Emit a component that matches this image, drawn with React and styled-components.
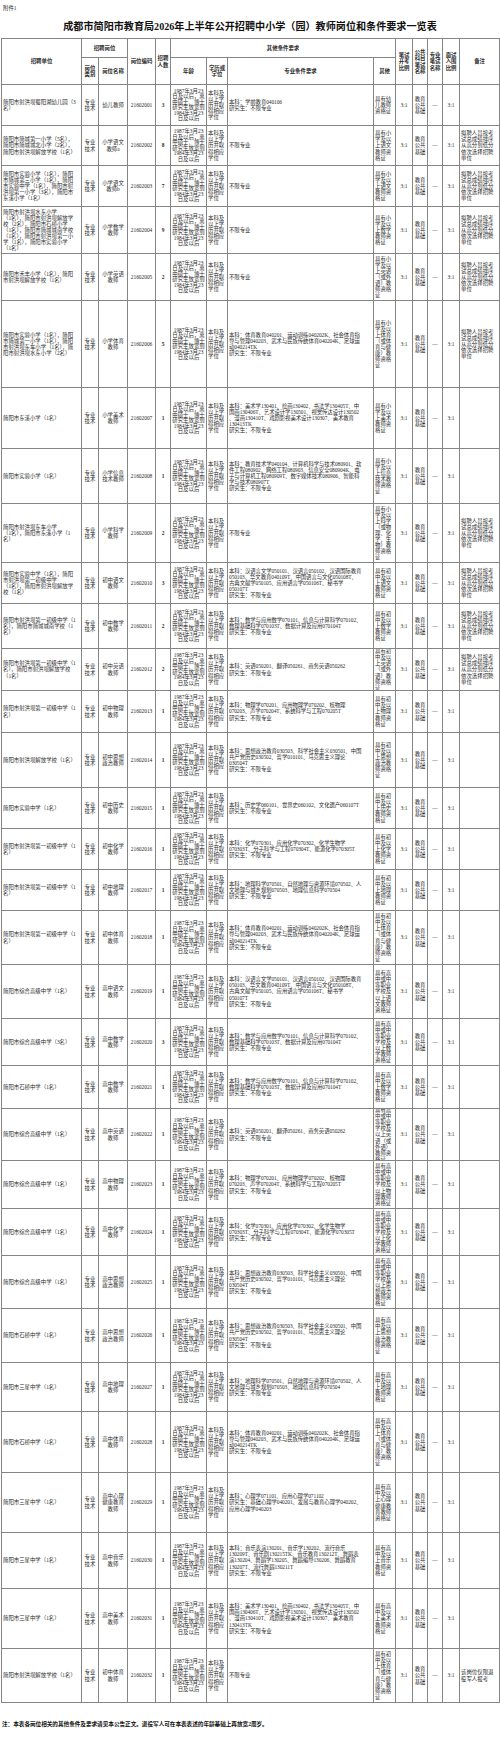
import React from "react";
import styled, { createGlobalStyle } from "styled-components";

const GlobalStyle = createGlobalStyle`
  html, body {
    margin: 0;
    padding: 0;
    background: #fff;
  }
  body {
    font-family: "Liberation Serif", "Noto Sans CJK SC", serif;
    color: #2a2a2a;
  }
`;

const COLS = [80, 17, 29, 28, 15, 36, 21, 146, 22, 17, 15, 15, 17, 40];

const AGE = "1987年3月23\n日及以后，离\n中硕士、博士\n研究生放宽到\n1984年3月23\n日及以后";
const EDU = "本科及以上学历并取得相应学位";
const REMARK = "拟聘人员按考\n试总成绩排序\n从高分到低分\n依次选择招聘\n单位";
const NONE = "不限专业";

const S_PE =
  "本科：体育教育040201、运动训练040202K、社会体育指\n导与管理040203、武术与民族传统体育040204K、足球运\n动040214TK\n研究生：不限专业";
const S_ART =
  "本科：美术学130401、绘画130402、书法学130405T、中\n国画130406T、艺术设计学130501、视觉传达设计130502\n、漫画130410T、戏剧影视美术设计130307、美术教育\n130413TK\n研究生：不限专业";
const S_CHN =
  "本科：汉语言文学050101、汉语言050102、汉语国际教育\n050103、华文教育040109T、中国语言与文化050108T、\n古典文献学050105、应用语言学050106T、秘书学\n050107T\n研究生：不限专业";
const S_MATH =
  "本科：数学与应用数学070101、信息与计算科学070102、\n数理基础科学070103T、数据计算及应用070104T\n研究生：不限专业";
const S_ENG = "本科：英语050201、翻译050261、商务英语050262\n研究生：不限专业";
const S_PHY =
  "本科：物理学070201、应用物理学070202、核物理\n070203、声学070204T、系统科学与工程070205T\n研究生：不限专业";
const S_POL =
  "本科：思想政治教育030503、科学社会主义030501、中国\n共产党历史030502、哲学010101、马克思主义理论\n030504T\n研究生：不限专业";
const S_CHEM =
  "本科：化学070301、应用化学070302、化学生物学\n070303T、分子科学与工程070304T、能源化学070305T\n研究生：不限专业";
const S_GEO =
  "本科：地理科学070501、自然地理与资源环境070502、人\n文地理与城乡规划070503、地理信息科学070504\n研究生：不限专业";

const HS = "具有高中或中等职业学校及以上";
const FIRST = "简阳市射洪坝第一初级中学（1\n名）";

const rows = [
  { h: 41, unit: "简阳市射洪坝蜀阳湖幼儿园（3\n名）", name: "幼儿教师", n: 3, spec: "本科：学前教育040106\n研究生：不限专业", other: "具有幼儿教师资格证" },
  { h: 40, unit: "简阳市简城第一小学（5名），\n简阳市简城城北小学（2名），\n简阳市射洪坝解放学校（1名）", name: "小学语文\n教师a", n: 8, spec: NONE, other: "具有小学及以上语文教师资格证", remark: REMARK },
  { h: 41, unit: "简阳市实验小学（1名），简阳\n市简城第三小学（1名），简阳\n市实验中学（1名），简阳市射\n洪坝第一小学（3名），简阳市\n东溪小学（1名）", name: "小学语文\n教师b", n: 7, spec: NONE, other: "具有小学及以上语文教师资格证", remark: REMARK },
  { h: 47, unit: "简阳市射洪坝水东小学\n（1名），简阳市射洪坝解放学\n校（2名），简阳市石桥小学\n（1名），简阳市简城城南学校\n（1名），简阳市射洪坝第一小\n学（1名），简阳市实验小学\n（1名）", name: "小学数学\n教师", n: 9, spec: NONE, other: "具有小学及以上数学教师资格证", remark: REMARK },
  { h: 47, unit: "简阳市禾丰小学（1名），简阳\n市射洪坝解放学校（1名）", name: "小学英语\n教师", n: 2, spec: NONE, other: "具有小学及以上英语（或外语）教师资格证", remark: REMARK },
  { h: 87, unit: "简阳市实验小学（1名），简阳\n市简城第一小学（1名），简阳\n市射洪坝东车小学（1名），简\n阳市射洪坝水东小学（2名）", name: "小学体育\n教师", n: 5, spec: S_PE, other: "具有小学及以上体育（或体育与健康）教师资格证", remark: REMARK },
  { h: 61, unit: "简阳市东溪小学（1名）", name: "小学美术\n教师", n: 1, spec: S_ART, other: "具有小学及以上美术教师资格证" },
  { h: 55, unit: "简阳市实验小学（1名）", name: "小学信息\n技术教师", n: 1, spec: "本科：教育技术学040104、计算机科学与技术080901、软\n件工程080902、网络工程080903、信息安全080904K、电\n子与计算机工程080909T、数字媒体技术080906、智能科\n学与技术080907T\n研究生：不限专业", other: "具有小学及以上信息技术教师资格证" },
  { h: 59, unit: "简阳市射洪坝东车小学\n（1名），简阳市东溪小学（1\n名）", name: "小学科学\n教师", n: 2, spec: NONE, other: "具有小学及以上科学（或物理、化学、生物）教师资格证", remark: REMARK },
  { h: 41, unit: "简阳市实验中学（1名），简阳\n市射洪坝第一初级中学\n（1名），简阳市射洪坝解放学\n校（1名）", name: "初中语文\n教师", n: 3, spec: S_CHN, other: "具有初中及以上语文教师资格证", remark: REMARK },
  { h: 45, unit: "简阳市射洪坝第一初级中学（1\n名），简阳市简城城南学校（1\n名）", name: "初中数学\n教师", n: 2, spec: S_MATH, other: "具有初中及以上数学教师资格证", remark: REMARK },
  { h: 42, unit: "简阳市射洪坝第一初级中学（1\n名），简阳市射洪坝解放学校\n（1名）", name: "初中英语\n教师", n: 2, spec: S_ENG, other: "具有初中及以上英语（或外语）教师资格证", remark: REMARK },
  { h: 42, unit: FIRST, name: "初中物理\n教师", n: 1, spec: S_PHY, other: "具有初中及以上物理教师资格证" },
  { h: 55, unit: "简阳市射洪坝解放学校（1名）", name: "初中思想\n政治教师", n: 1, spec: S_POL, other: "具有初中及以上思想政治教师资格证" },
  { h: 41, unit: "简阳市实验中学（1名）", name: "初中历史\n教师", n: 1, spec: "本科：历史学060101、世界史060102、文化遗产060107T\n研究生：不限专业", other: "具有初中及以上历史教师资格证" },
  { h: 41, unit: FIRST, name: "初中化学\n教师", n: 1, spec: S_CHEM, other: "具有初中及以上化学教师资格证" },
  { h: 41, unit: FIRST, name: "初中地理\n教师", n: 1, spec: S_GEO, other: "具有初中及以上地理教师资格证" },
  { h: 54, unit: FIRST, name: "初中体育\n教师", n: 1, spec: S_PE, other: "具有初中及以上体育（或体育与健康）教师资格证" },
  { h: 54, unit: "简阳市综合高级中学（1名）", name: "高中语文\n教师", n: 1, spec: S_CHN, other: HS + "语文教师资格证" },
  { h: 47, unit: "简阳市综合高级中学（3名）", name: "高中数学\n教师", n: 3, spec: S_MATH, other: HS + "数学教师资格证" },
  { h: 43, unit: "简阳市石桥中学（1名）", name: "高中数学\n教师", n: 1, spec: S_MATH, other: "具有高中及以上数学教师资格证" },
  { h: 52, unit: "简阳市综合高级中学（1名）", name: "高中英语\n教师", n: 1, spec: S_ENG, other: HS + "英语（或外语）教师资格证" },
  { h: 48, unit: "简阳市综合高级中学（1名）", name: "高中物理\n教师", n: 1, spec: S_PHY, other: HS + "物理教师资格证" },
  { h: 47, unit: "简阳市综合高级中学（1名）", name: "高中化学\n教师", n: 1, spec: S_CHEM, other: HS + "化学教师资格证" },
  { h: 53, unit: "简阳市综合高级中学（1名）", name: "高中思想\n政治教师", n: 1, spec: S_POL, other: HS + "思想政治教师资格证" },
  { h: 54, unit: "简阳市石桥中学（1名）", name: "高中思想\n政治教师", n: 1, spec: S_POL, other: "具有高中及以上思想政治教师资格证" },
  { h: 49, unit: "简阳市三星中学（1名）", name: "高中地理\n教师", n: 1, spec: S_GEO, other: "具有高中及以上地理教师资格证" },
  { h: 61, unit: "简阳市石桥中学（1名）", name: "高中体育\n教师", n: 1, spec: S_PE, other: "具有高中及以上体育（或体育与健康）教师资格证" },
  { h: 60, unit: "简阳市三星中学（1名）", name: "高中心理\n健康教育\n教师", n: 1, spec: "本科：心理学071101、应用心理学071102\n研究生：基础心理学040201、发展与教育心理学040202、\n应用心理学040203", other: "具有高中及以上心理健康教育教师资格证" },
  { h: 56, unit: "简阳市三星中学（1名）", name: "高中音乐\n教师", n: 1, spec: "本科：音乐表演130201、音乐学130202、流行音乐\n130209T、音乐剧130215TK、音乐教育130212T、舞蹈表\n演130204、舞蹈学130205、舞蹈编导130206、舞蹈教育\n130207T、流行舞蹈130211T\n研究生：不限专业", other: "具有高中及以上音乐教师资格证" },
  { h: 60, unit: "简阳市三星中学（1名）", name: "高中美术\n教师", n: 1, spec: S_ART, other: "具有高中及以上美术教师资格证" },
  { h: 54, unit: "简阳市射洪坝解放学校（1名）", name: "初中体育\n教师", n: 1, spec: NONE, other: "具有初中及以上体育（或体育与健康）教师资格证", remark: "该岗位仅限退\n役军人报考" },
];

const Page = styled.div`
  width: 500px;
  height: 1744px;
  background: #fff;
  overflow: hidden;
`;

const Top = styled.div`
  height: 38px;
  display: flex;
  flex-direction: column;
`;

const Attach = styled.div`
  margin: 5px 0 0 3px;
  font-size: 5.4px;
  line-height: 6px;
`;

const Title = styled.h1`
  margin: 10px 0 0;
  font-size: 10.1px;
  line-height: 12px;
  font-weight: bold;
  text-align: center;
  color: #111;
`;

const Table = styled.table`
  margin-left: 1px;
  width: 498px;
  table-layout: fixed;
  border-collapse: collapse;
`;

const Row = styled.tr`
  height: ${(p) => p.$h}px;
`;

const Head = styled.th`
  border: 1px solid #858585;
  padding: 0 1px;
  font-size: 5.4px;
  line-height: 6.2px;
  font-weight: bold;
  text-align: center;
  vertical-align: middle;
  white-space: pre-line;
  color: #2a2a2a;
`;

const Cell = styled.td`
  border: 1px solid #858585;
  padding: 0 1px;
  vertical-align: middle;
  font-size: 5.4px;
  font-weight: ${(p) => (p.$bold ? "bold" : "normal")};
  text-align: ${(p) => p.$align || "center"};
`;

const Box = styled.div`
  height: ${(p) => p.$h - 1}px;
  display: flex;
  flex-direction: column;
  justify-content: center;
  overflow: hidden;
  line-height: ${(p) => p.$lh || 6.1}px;
  letter-spacing: ${(p) => (p.$tight ? "-0.08px" : "normal")};
  white-space: ${(p) => (p.$wrap ? "normal" : "pre")};
`;

const Note = styled.p`
  margin: 18px 0 0 2px;
  font-size: 5.6px;
  line-height: 6px;
  font-weight: bold;
  color: #111;
`;

const C = ({ h, align, bold, wrap, lh, tight, children }) => (
  <Cell $align={align} $bold={bold}>
    <Box $h={h} $wrap={wrap} $lh={lh} $tight={tight}>
      {children}
    </Box>
  </Cell>
);

export default function App() {
  return (
    <Page>
      <GlobalStyle />
      <Top>
        <Attach>附件1</Attach>
        <Title>成都市简阳市教育局2026年上半年公开招聘中小学（园）教师岗位和条件要求一览表</Title>
      </Top>
      <Table>
        <colgroup>
          {COLS.map((w, i) => (
            <col key={i} style={{ width: w }} />
          ))}
        </colgroup>
        <thead>
          <Row $h={19}>
            <Head rowSpan={2}>招聘单位</Head>
            <Head colSpan={2}>招聘岗位</Head>
            <Head rowSpan={2}>岗位编码</Head>
            <Head rowSpan={2}>{"招聘\n人数"}</Head>
            <Head colSpan={4}>其他条件要求</Head>
            <Head rowSpan={2}>{"笔试\n开考\n比例"}</Head>
            <Head rowSpan={2}>{"公共\n科目\n笔试\n名称"}</Head>
            <Head rowSpan={2}>{"专业\n笔试\n名称"}</Head>
            <Head rowSpan={2}>{"面试\n入围\n比例"}</Head>
            <Head rowSpan={2}>备注</Head>
          </Row>
          <Row $h={27}>
            <Head>{"岗位\n类别"}</Head>
            <Head>岗位名称</Head>
            <Head>年龄</Head>
            <Head>{"学历或\n学位"}</Head>
            <Head>专业条件要求</Head>
            <Head>其他</Head>
          </Row>
        </thead>
        <tbody>
          {rows.map((r, i) => (
            <Row key={i} $h={r.h}>
              <C h={r.h} align="left">{r.unit}</C>
              <C h={r.h}>{"专业\n技术"}</C>
              <C h={r.h}>{r.name}</C>
              <C h={r.h}>{`216020${String(i + 1).padStart(2, "0")}`}</C>
              <C h={r.h} bold>{r.n}</C>
              <C h={r.h} lh={5.5}>{AGE}</C>
              <C h={r.h} align="left" wrap>{EDU}</C>
              <C h={r.h} align="left" tight>{r.spec}</C>
              <C h={r.h} align="left" wrap>{r.other}</C>
              <C h={r.h}>3:1</C>
              <C h={r.h}>{"教育\n公共\n基础"}</C>
              <C h={r.h}>—</C>
              <C h={r.h}>3:1</C>
              <C h={r.h} align="left">{r.remark || ""}</C>
            </Row>
          ))}
        </tbody>
      </Table>
      <Note>注：本表各岗位相关的其他条件及要求请见本公告正文。退役军人可在本表表述的年龄基础上再放宽2周岁。</Note>
    </Page>
  );
}
